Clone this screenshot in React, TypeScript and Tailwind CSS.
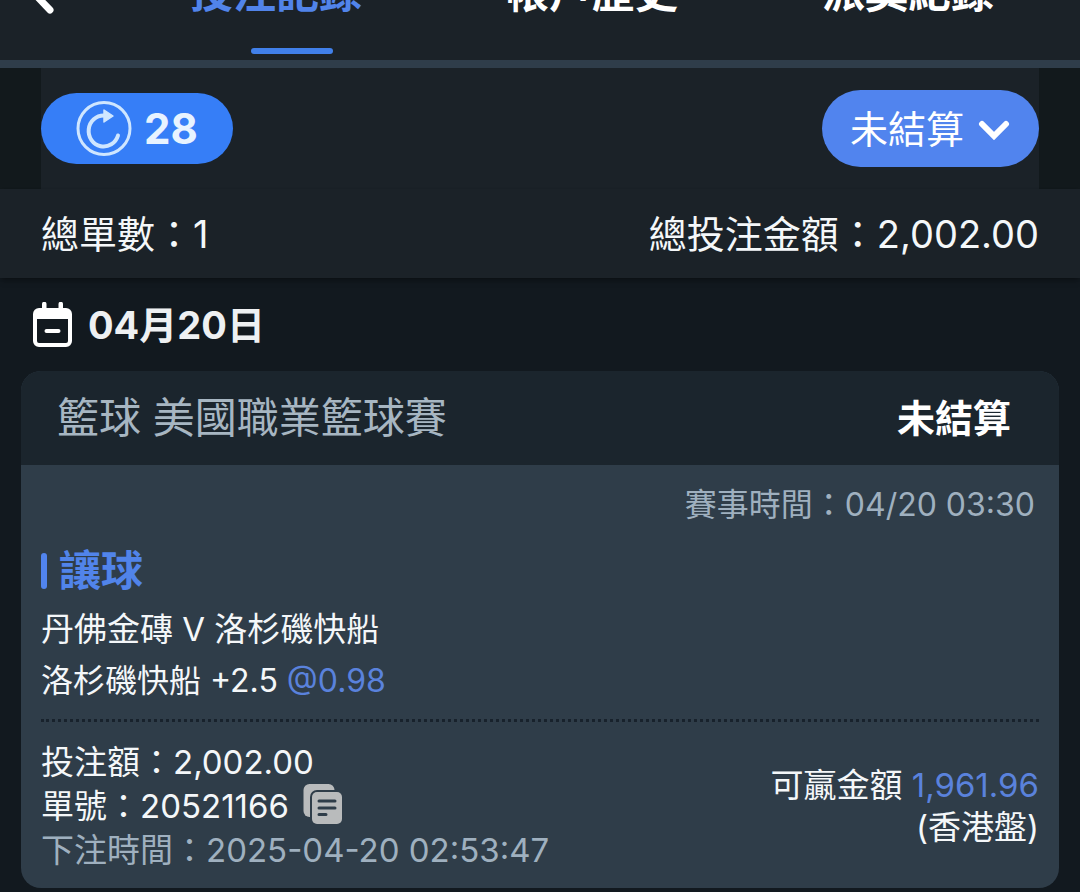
import React, { useState } from 'react';

const tabs = ['投注記錄', '帳戶歷史', '派獎紀錄'];

function BackIcon() {
  return (
    <svg viewBox="0 0 40 64" className="h-16 w-10" fill="none" stroke="currentColor" strokeWidth="7" strokeLinecap="round" aria-hidden="true">
      <path d="M34 10 12 33l22 23" />
    </svg>
  );
}

function RefreshIcon() {
  return (
    <svg viewBox="0 0 56 56" className="h-14 w-14" fill="none" stroke="#cfe6ff" aria-hidden="true">
      <circle cx="28" cy="27.500" r="26" strokeWidth="3" />
      <path d="M28 14.500a15 15.500 0 1 0 14 20" strokeWidth="4" strokeLinecap="round" />
      <path d="M28 9 37 15 28 21z" fill="#cfe6ff" strokeWidth="1.500" strokeLinejoin="round" />
    </svg>
  );
}

function CalendarIcon() {
  return (
    <svg viewBox="0 0 39 45" className="h-[45px] w-[39px]" aria-hidden="true">
      <path fill="#fff" fillRule="evenodd" d="M9 2a2 2 0 0 1 4.500 0v4h12V2a2 2 0 0 1 4.500 0v4h3a6 6 0 0 1 6 6v27a6 6 0 0 1-6 6H6a6 6 0 0 1-6-6V12a6 6 0 0 1 6-6h3zM4 17v22a2 2 0 0 0 2 2h27a2 2 0 0 0 2-2V17z" />
      <path d="M13.500 29h12" stroke="#fff" strokeWidth="4" strokeLinecap="round" />
    </svg>
  );
}

function CopyIcon() {
  return (
    <svg viewBox="0 0 40 40" className="h-10 w-10" aria-hidden="true">
      <rect x="0.500" y="0" width="31" height="33" rx="6" fill="#b9bbbc" />
      <rect x="7" y="6" width="33" height="35" rx="7" fill="#2f3d49" />
      <rect x="9" y="8" width="30" height="32" rx="5" fill="#b9bbbc" />
      <path d="M16 17h16M16 24h16M16 30.500h7" stroke="#2f3d49" strokeWidth="3" strokeLinecap="round" />
    </svg>
  );
}

export default function App() {
  const [activeTab, setActiveTab] = useState(tabs[0]);
  const [status, setStatus] = useState('未結算');

  return (
    <div className="min-h-screen overflow-hidden bg-[#12191f] font-['Inter','Noto_Sans_CJK_TC',sans-serif] text-[#f4f7f9]">
      {/* Top tabs */}
      <header className="-mt-[46px] flex h-[114px] border-b-8 border-[#2f3d4a] bg-[#1b2228] pr-3.5">
        <button aria-label="返回" className="flex w-[118px] shrink-0 items-start pl-4 text-white">
          <BackIcon />
        </button>
        <nav className="flex flex-1">
          {tabs.map((tab) => (
            <button
              key={tab}
              onClick={() => setActiveTab(tab)}
              className={`flex flex-1 flex-col items-center justify-between pt-3.5 pb-1.5 text-[43px] leading-[48px] font-bold ${
                activeTab === tab ? 'text-[#5184ea]' : 'text-white'
              }`}
            >
              <span>{tab}</span>
              {activeTab === tab && <span className="ml-8 h-1.5 w-[82px] rounded-full bg-[#4180ea]" />}
            </button>
          ))}
        </nav>
      </header>

      {/* Refresh and filter */}
      <div className="bg-[#12191c] px-[41px]">
        <div className="flex h-[121px] items-center justify-between bg-[#1b2228]">
          <button className="flex h-[71px] w-48 items-center justify-center gap-3 rounded-full bg-[#367ef7] text-[42px] leading-none font-bold text-[#e8f3ff]">
            <RefreshIcon />
            28
          </button>
          <div className="relative">
            <select
              aria-label="注單狀態"
              value={status}
              onChange={(e) => setStatus(e.target.value)}
              className="h-[77px] w-[217px] appearance-none rounded-full bg-[#5184ee] pr-16 pl-7 text-[38px] leading-[56px] text-white"
            >
              <option>未結算</option>
              <option>已結算</option>
            </select>
            <svg viewBox="0 0 32 20" className="pointer-events-none absolute top-[30px] right-[29px] h-5 w-8" fill="none" stroke="#fff" strokeWidth="6" strokeLinecap="round" aria-hidden="true">
              <path d="m4 4 12 12L28 4" />
            </svg>
          </div>
        </div>
      </div>

      {/* Totals */}
      <div className="flex h-[89px] items-center justify-between bg-[#1b2228] px-[41px] text-[38px] leading-[48px] shadow-md shadow-black/25">
        <span>總單數：1</span>
        <span>總投注金額：2,002.00</span>
      </div>

      <main className="px-[21px]">
        <h2 className="flex h-[93px] items-center gap-4 pl-3 text-[38px] leading-[48px] font-bold text-[#eef0f2]">
          <CalendarIcon />
          04月20日
        </h2>

        <article className="overflow-hidden rounded-[20px] bg-[#2f3d49]">
          <div className="flex h-[94px] items-center justify-between bg-[#1b252d] pr-12 pl-9">
            <span className="text-[42px] leading-[48px] text-[#a7b6c2]">籃球 美國職業籃球賽</span>
            <span className="text-[38px] leading-[48px] font-bold text-white">未結算</span>
          </div>

          <div className="px-5 py-4 text-[33px] leading-[44px]">
            <p className="pr-1 text-right text-[32px] leading-[48px] text-[#9fb0bf]">賽事時間：04/20 03:30</p>
            <h3 className="mt-4 flex items-center gap-3 text-[42px] leading-[52px] font-bold text-[#5184ea]">
              <span className="h-9 w-1.5 rounded-full bg-[#5184ee]" />
              讓球
            </h3>
            <p className="mt-1.5 leading-[52px]">丹佛金磚 V 洛杉磯快船</p>
            <p className="text-[32px] leading-[52px]">
              洛杉磯快船 +2.5 <span className="text-[#5a82dc]">@0.98</span>
            </p>
            <div className="mt-3 flex items-center justify-between border-t-3 border-dotted border-[#18222c] pt-[18px]">
              <div>
                <p>投注額：2,002.00</p>
                <p className="flex items-start gap-3.5">
                  單號：20521166
                  <button aria-label="複製單號">
                    <CopyIcon />
                  </button>
                </p>
                <p className="text-[#9fb0bf]">下注時間：2025-04-20 02:53:47</p>
              </div>
              <div className="text-right leading-[42px]">
                <p>
                  可贏金額 <span className="text-[#5a82dc]">1,961.96</span>
                </p>
                <p>(香港盤)</p>
              </div>
            </div>
          </div>
        </article>
      </main>
    </div>
  );
}
